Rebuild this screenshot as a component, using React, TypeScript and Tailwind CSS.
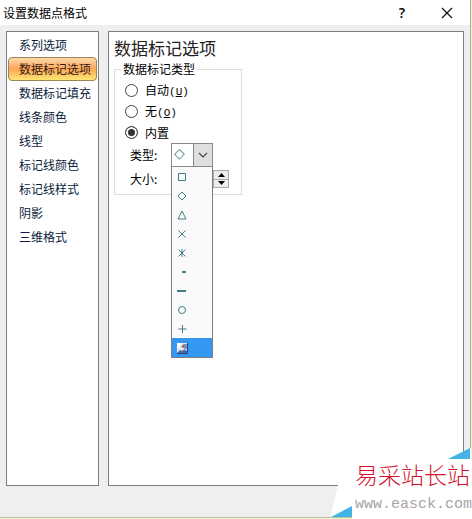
import React from 'react'

const sections = [
  '系列选项',
  '数据标记选项',
  '数据标记填充',
  '线条颜色',
  '线型',
  '标记线颜色',
  '标记线样式',
  '阴影',
  '三维格式',
]

type Marker = 'square' | 'diamond' | 'triangle' | 'cross' | 'star' | 'dot' | 'dash' | 'circle' | 'plus' | 'picture'

const markers: Marker[] = ['square', 'diamond', 'triangle', 'cross', 'star', 'dot', 'dash', 'circle', 'plus', 'picture']

const markerPaths: Record<Exclude<Marker, 'picture'>, React.ReactNode> = {
  square: <path d="M2.5 2.5h7v7h-7z" />,
  diamond: <path d="M6 2l4 4-4 4-4-4z" />,
  triangle: <path d="M6 2l4 8H2z" />,
  cross: <path d="M2.5 2.5l7 7M9.5 2.5l-7 7" />,
  star: <path d="M2.5 2.5l7 7M9.5 2.5l-7 7M6 2v8" />,
  dot: <path d="M6 6h4" strokeWidth={2} />,
  dash: <path d="M1 6h9" strokeWidth={2} />,
  circle: <circle cx="6" cy="6" r="3.5" />,
  plus: <path d="M6.5 2v8M2.5 6h8" />,
}

function MarkerIcon({ marker }: { marker: Marker }) {
  if (marker === 'picture') {
    return (
      <svg className="w-3 h-3" viewBox="0 0 12 12">
        <path d="M1 1h10v10H1z" fill="#dfe6f2" />
        <path d="M1 1h5L1 8z" fill="#fafcff" />
        <path d="M7 2h4v5H8z" fill="#7893c4" />
        <path d="M1 11l3-3 2 1 2-2 3 2v2z" fill="#4b6aa8" />
        <circle cx="7" cy="4.5" r="1.3" fill="#b5533f" />
        <path d="M4 7l2-1 3 1-2 1z" fill="#e8e0e4" />
        <path d="M11.500 1v10.500H1" fill="none" stroke="#23457c" />
      </svg>
    )
  }
  return (
    <svg className="w-3 h-3" viewBox="0 0 12 12" fill="none" stroke="#427d85">
      {markerPaths[marker]}
    </svg>
  )
}

function RadioRow({ id, label, accessKey, checked, onChange }: {
  id: string
  label: string
  accessKey?: string
  checked: boolean
  onChange: () => void
}) {
  return (
    <div className="flex items-center gap-[7px] h-[21px] pl-[10px]">
      <input
        type="radio"
        id={id}
        name="marker-type"
        checked={checked}
        onChange={onChange}
        className="appearance-none w-[13px] h-[13px] rounded-full border border-[#444] bg-white checked:bg-[#333] checked:shadow-[inset_0_0_0_2px_white]"
      />
      <label htmlFor={id}>
        {label}
        {accessKey && (
          <span className="font-['Liberation_Mono',monospace] text-[11px]">
            (<u>{accessKey}</u>)
          </span>
        )}
      </label>
    </div>
  )
}

function Watermark() {
  return (
    <div className="absolute right-0 bottom-0 w-[142px] h-[72px]">
      <svg className="absolute inset-0 w-full h-full" viewBox="0 0 142 72">
        <path d="M22 12H118L141 1V12H142V72H22V70H0L8 38z" fill="#fff" />
        <path d="M118 12L140 1V12z" fill="#43b3e6" />
        <path d="M1 70L22 59V70z" fill="#43b3e6" />
      </svg>
      <div className="relative flex flex-col gap-1.5 pt-[14px] pl-[25px] whitespace-nowrap">
        <span className="text-[23px] leading-[26px] font-light text-[#d3112d]">易采站长站</span>
        <span className="font-['Liberation_Mono',monospace] text-[15px] leading-[24px] text-[#aaa3a3]">www.easck.com</span>
      </div>
    </div>
  )
}

export default function App() {
  const [section, setSection] = React.useState('数据标记选项')
  const [mode, setMode] = React.useState('builtin')
  const [active, setActive] = React.useState<Marker>('picture')

  return (
    <div className="relative min-h-screen flex flex-col pr-px overflow-hidden bg-[#f1f3d6] font-['Noto_Sans_CJK_SC',sans-serif] text-xs leading-[18px] text-black">
      <header className="flex items-center h-[25px] pl-[3px] pr-[17px] border-r border-[#a9b08f] bg-white">
        <h1 className="flex-1">设置数据点格式</h1>
        <button aria-label="帮助" className="w-5 mr-[29px] font-['Open_Sans',sans-serif] text-sm font-semibold">?</button>
        <button aria-label="关闭" className="w-3 h-3">
          <svg className="w-3 h-3" viewBox="0 0 12 12" fill="none" stroke="#111" strokeWidth="1.2">
            <path d="M1 1l10 10M11 1L1 11" />
          </svg>
        </button>
      </header>

      <main className="flex-1 flex gap-[9px] px-[6px] pt-[6px] pb-[31px] border-r border-[#a9b08f] bg-[#efefef]">
        <nav className="w-[93px] shrink-0 border border-[#7c7e84] bg-white p-px">
          {sections.map((name) => (
            <button
              key={name}
              onClick={() => setSection(name)}
              className={`block w-full h-6 pl-[10px] text-left border rounded-sm whitespace-nowrap ${
                name === section
                  ? 'border-[#a08554] bg-linear-to-b from-[#fbd9a8] via-[#fba558] to-[#fde774] text-[#3a1a10]'
                  : 'border-transparent text-[#0b1c3c]'
              }`}
            >
              {name}
            </button>
          ))}
        </nav>

        <section className="flex-1 border border-[#7c7e84] bg-white pt-1 pl-[5px]">
          <h2 className="text-[17px] leading-6 text-[#222]">数据标记选项</h2>
          <fieldset className="w-[128px] border border-[#dcdcdc] pt-[2px] pb-[3px]">
            <legend className="ml-[6px] px-[2px]">数据标记类型</legend>
            <RadioRow id="auto" label="自动" accessKey="U" checked={mode === 'auto'} onChange={() => setMode('auto')} />
            <RadioRow id="none" label="无" accessKey="O" checked={mode === 'none'} onChange={() => setMode('none')} />
            <RadioRow id="builtin" label="内置" checked={mode === 'builtin'} onChange={() => setMode('builtin')} />

            <div className="flex items-center h-6 pl-[15px]">
              <label htmlFor="type" className="w-[41px]">类型:</label>
              <div className="relative">
                <select
                  id="type"
                  defaultValue="◇"
                  className="block appearance-none w-[42px] h-6 pl-[2px] pb-1 border border-[#8a8a8a] bg-white font-['DejaVu_Sans',sans-serif] text-sm leading-none text-[#427d85]"
                >
                  <option>◇</option>
                  <option>□</option>
                  <option>△</option>
                  <option>○</option>
                </select>
                <span className="absolute right-0 top-0 flex items-center justify-center w-5 h-6 border border-[#8a8a8a] bg-[#dfdfdf] pointer-events-none">
                  <svg className="w-2.5 h-2.5" viewBox="0 0 10 10" fill="none" stroke="#444" strokeWidth="1.2">
                    <path d="M1 3l4 4 4-4" />
                  </svg>
                </span>
                <ul role="listbox" aria-label="类型" className="absolute left-0 top-full z-10 w-[42px] border border-t-0 border-[#7c7e84] bg-[#fafafa]">
                  {markers.map((marker) => (
                    <li
                      key={marker}
                      role="option"
                      aria-label={marker}
                      aria-selected={marker === active}
                      onMouseEnter={() => setActive(marker)}
                      className={`flex items-center h-[19px] pl-1 ${marker === active ? 'bg-[#3399f0]' : ''}`}
                    >
                      <MarkerIcon marker={marker} />
                    </li>
                  ))}
                </ul>
              </div>
            </div>

            <div className="flex items-center h-6 pl-[15px]">
              <label htmlFor="size" className="w-[41px]">大小:</label>
              <input id="size" type="text" className="w-[42px] h-[18px] border border-[#aaa] bg-white" />
              <div className="flex flex-col w-4 h-[18px] border border-[#aaa] bg-[#eee]">
                <button aria-label="增大" className="flex-1 flex items-center justify-center border-b border-[#aaa]">
                  <svg className="w-[7px] h-1" viewBox="0 0 7 4"><path d="M0 4L3.500 0 7 4z" /></svg>
                </button>
                <button aria-label="减小" className="flex-1 flex items-center justify-center">
                  <svg className="w-[7px] h-1" viewBox="0 0 7 4"><path d="M0 0h7L3.500 4z" /></svg>
                </button>
              </div>
            </div>
          </fieldset>
        </section>
      </main>

      <div className="h-[2px] border-t border-[#b5c59b]" />
      <Watermark />
    </div>
  )
}
